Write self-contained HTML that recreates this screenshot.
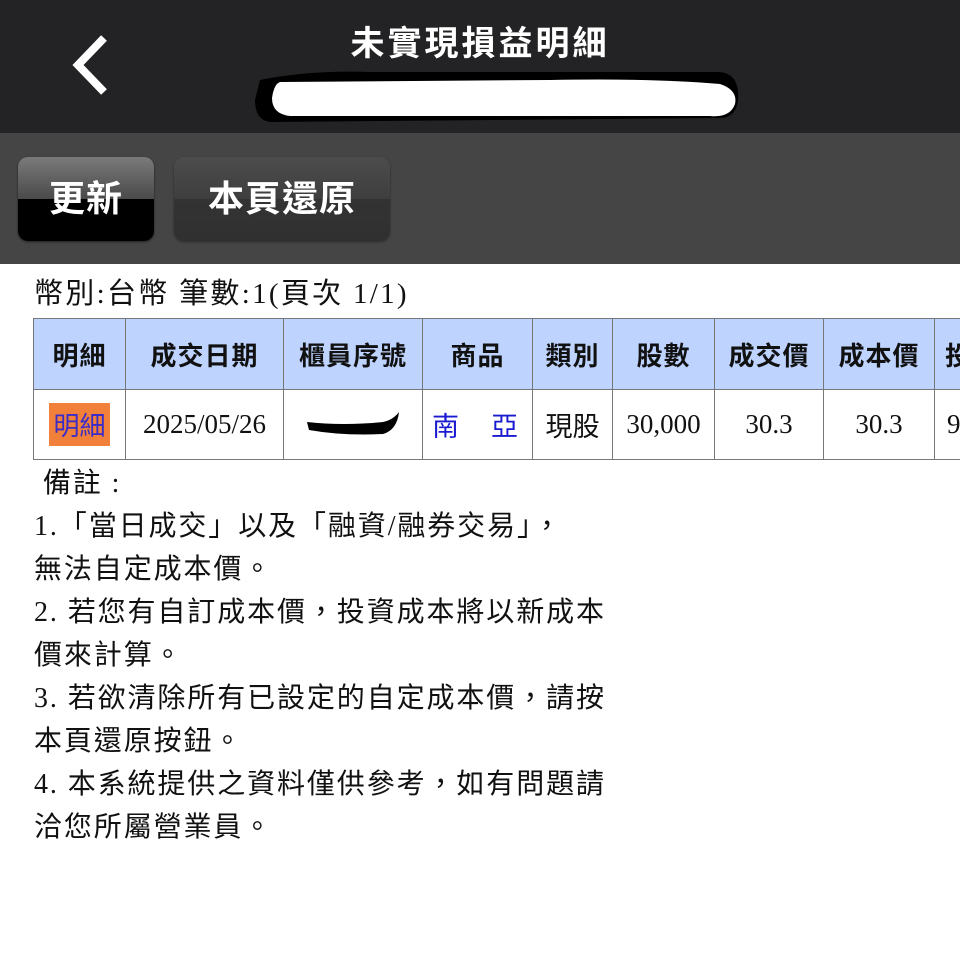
<!DOCTYPE html>
<html><head><meta charset="utf-8"><style>
*{margin:0;padding:0;box-sizing:border-box}
body{width:960px;height:956px;background:#fff;overflow:hidden;position:relative;font-family:"Liberation Serif","Noto Sans CJK TC",serif;color:#111}
.top{position:absolute;left:0;top:0;width:960px;height:133px;background:#232325}
.title{position:absolute;left:0;width:960px;top:16px;text-align:center;color:#fff;font:bold 34px "Liberation Sans","Noto Sans CJK TC",sans-serif;letter-spacing:3px}
.bar{position:absolute;left:0;top:133px;width:960px;height:131px;background:#454545}
.btn{position:absolute;top:157px;height:84px;border-radius:10px;color:#fff;font:bold 36px "Liberation Sans","Noto Sans CJK TC",sans-serif;text-align:center;line-height:84px;letter-spacing:1px}
.b1{left:18px;width:136px;background:linear-gradient(#7a7a7a,#4a4a4a 50%,#000 50%,#000);box-shadow:0 1px 2px #222}
.b2{left:174px;width:216px;background:linear-gradient(#4c4c4c,#3e3e3e 50%,#333 50%,#303030);box-shadow:0 1px 2px #2a2a2a}
.info{position:absolute;left:34px;top:274px;font-size:29px;line-height:40px;letter-spacing:2.3px}
table{position:absolute;left:33px;top:318px;width:961px;border-collapse:collapse;table-layout:fixed}
td,th{border:1.5px solid #777;text-align:center;font-size:27px}
th{background:#bed4ff;height:71px;font:bold 26px "Liberation Sans","Noto Sans CJK TC",sans-serif;letter-spacing:1px;white-space:nowrap;overflow:hidden}
td{height:70px;font-weight:normal;white-space:nowrap;overflow:hidden}
.notes{position:absolute;left:34px;top:462px;font-size:28px;line-height:43px;letter-spacing:1.9px}
</style></head><body>
<div class="top">
<svg style="position:absolute;left:68px;top:34px" width="44" height="62"><polyline points="36,4 10,31 36,58" fill="none" stroke="#fff" stroke-width="8"/></svg>
<div class="title">未實現損益明細</div>
<svg style="position:absolute;left:250px;top:60px" width="500" height="75"><path d="M10,20 Q60,10 120,12 L470,12 Q490,14 488,40 Q486,58 470,58 L20,62 Q5,60 5,40 Z" fill="#000"/><path d="M30,22 L300,20 Q400,18 470,24 Q488,30 485,44 Q480,58 460,56 L40,56 Q22,54 22,38 Q24,24 30,22Z" fill="#fff"/></svg>
</div>
<div class="bar"></div>
<div class="btn b1">更新</div>
<div class="btn b2">本頁還原</div>
<div class="info">幣別:台幣 筆數:1(頁次 1/1)</div>
<table>
<colgroup><col style="width:92px"><col style="width:158px"><col style="width:139px"><col style="width:110px"><col style="width:80px"><col style="width:102px"><col style="width:109px"><col style="width:111px"><col style="width:60px"></colgroup>
<tr><th>明細</th><th>成交日期</th><th>櫃員序號</th><th>商品</th><th>類別</th><th>股數</th><th>成交價</th><th>成本價</th><th style="text-align:left;padding-left:10px">投</th></tr>
<tr><td><span style="display:inline-block;background:#f0803a;color:#3a2cc8;font-family:'Liberation Sans','Noto Sans CJK TC',sans-serif;padding:3px 4px;font-size:26px">明細</span></td><td>2025/05/26</td><td><svg width="100" height="30"><path d="M4,16 Q40,20 80,16 Q90,14 96,6 Q94,24 80,28 Q40,30 6,24 Z" fill="#000"/></svg></td><td style="color:#1a1ad0;font-family:'Liberation Sans','Noto Sans CJK TC',sans-serif;letter-spacing:32px;text-align:left;padding-left:9px">南亞</td><td>現股</td><td>30,000</td><td>30.3</td><td>30.3</td><td style="text-align:left;padding-left:12px">9</td></tr>
</table>
<div class="notes"><div>&nbsp;備註 :</div><div>1.「當日成交」以及「融資/融券交易」，</div><div>無法自定成本價。</div><div>2. 若您有自訂成本價，投資成本將以新成本</div><div>價來計算。</div><div>3. 若欲清除所有已設定的自定成本價，請按</div><div>本頁還原按鈕。</div><div>4. 本系統提供之資料僅供參考，如有問題請</div><div>洽您所屬營業員。</div></div>
</body></html>
